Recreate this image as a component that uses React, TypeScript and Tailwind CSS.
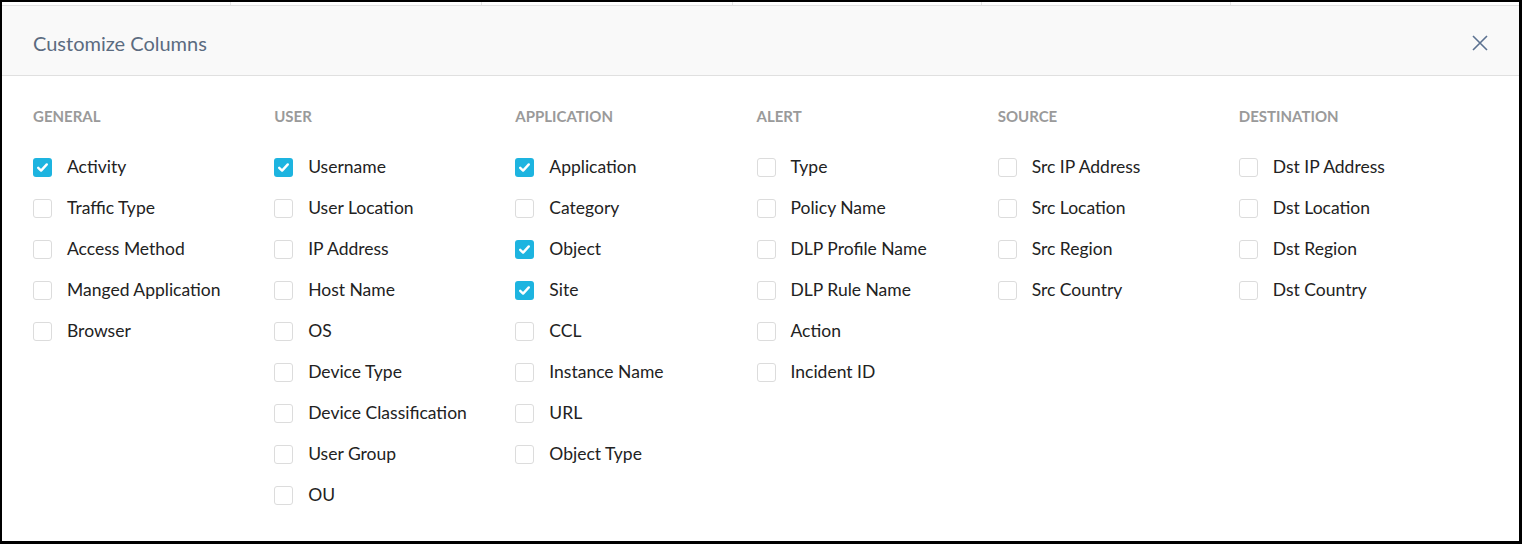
import React from "react";

type Item = { label: string; checked?: boolean };
type Col = { title: string; items: Item[] };

const cols: Col[] = [
  {
    title: "GENERAL",
    items: [
      { label: "Activity", checked: true },
      { label: "Traffic Type" },
      { label: "Access Method" },
      { label: "Manged Application" },
      { label: "Browser" },
    ],
  },
  {
    title: "USER",
    items: [
      { label: "Username", checked: true },
      { label: "User Location" },
      { label: "IP Address" },
      { label: "Host Name" },
      { label: "OS" },
      { label: "Device Type" },
      { label: "Device Classification" },
      { label: "User Group" },
      { label: "OU" },
    ],
  },
  {
    title: "APPLICATION",
    items: [
      { label: "Application", checked: true },
      { label: "Category" },
      { label: "Object", checked: true },
      { label: "Site", checked: true },
      { label: "CCL" },
      { label: "Instance Name" },
      { label: "URL" },
      { label: "Object Type" },
    ],
  },
  {
    title: "ALERT",
    items: [
      { label: "Type" },
      { label: "Policy Name" },
      { label: "DLP Profile Name" },
      { label: "DLP Rule Name" },
      { label: "Action" },
      { label: "Incident ID" },
    ],
  },
  {
    title: "SOURCE",
    items: [
      { label: "Src IP Address" },
      { label: "Src Location" },
      { label: "Src Region" },
      { label: "Src Country" },
    ],
  },
  {
    title: "DESTINATION",
    items: [
      { label: "Dst IP Address" },
      { label: "Dst Location" },
      { label: "Dst Region" },
      { label: "Dst Country" },
    ],
  },
];

function Check({ checked }: { checked?: boolean }) {
  if (checked) {
    return (
      <span className="flex h-[19px] w-[19px] shrink-0 items-center justify-center rounded-[3px] bg-[#1db4e0]">
        <svg width="13" height="13" viewBox="0 0 13 13" fill="none">
          <path d="M2.2 6.8 L5.1 9.6 L10.8 3.4" stroke="#ffffff" strokeWidth="2.4" strokeLinecap="round" strokeLinejoin="round" />
        </svg>
      </span>
    );
  }
  return <span className="block h-[19px] w-[19px] shrink-0 rounded-[3px] border border-[#dcdcdc] bg-white" />;
}

export default function App() {
  return (
    <div className="flex h-[544px] w-[1522px] flex-col bg-black pb-[3px] pl-[2px] pr-[3px] pt-[2px]" style={{ fontFamily: "Lato, 'Noto Sans', sans-serif" }}>
      <div className="flex flex-1 flex-col bg-white">
        <div className="flex h-[4px] border-b border-[#e2e2e2]">
          <div className="w-[229px] border-r border-[#e6e6e6]" />
          <div className="w-[251px] border-r border-[#e6e6e6]" />
          <div className="w-[251px] border-r border-[#e6e6e6]" />
          <div className="w-[249px] border-r border-[#e6e6e6]" />
          <div className="w-[249px] border-r border-[#e6e6e6]" />
          <div className="flex-1" />
        </div>
        <div className="flex h-[70px] items-center justify-between border-b border-[#e0e0e0] bg-[#f9f9f9] pl-[31px] pr-[30px] pt-[4px]">
          <span className="text-[20px] text-[#5b6b80]">Customize Columns</span>
          <svg width="18" height="18" viewBox="0 0 18 18" fill="none">
            <path d="M2 2 L16 16 M16 2 L2 16" stroke="#5b7190" strokeWidth="1.6" />
          </svg>
        </div>
        <div className="grid w-[1478px] grid-cols-6 pl-[31px] pt-[30px]">
          {cols.map((c) => (
            <div key={c.title} className="flex flex-col">
              <div className="mb-[21px] h-[20px] text-[15px] font-bold leading-[20px] text-[#9a9a9a]">{c.title}</div>
              {c.items.map((it) => (
                <div key={it.label} className="flex h-[41px] items-center gap-[15px]">
                  <Check checked={it.checked} />
                  <span className="text-[17.5px] text-[#222222]">{it.label}</span>
                </div>
              ))}
            </div>
          ))}
        </div>
      </div>
    </div>
  );
}
